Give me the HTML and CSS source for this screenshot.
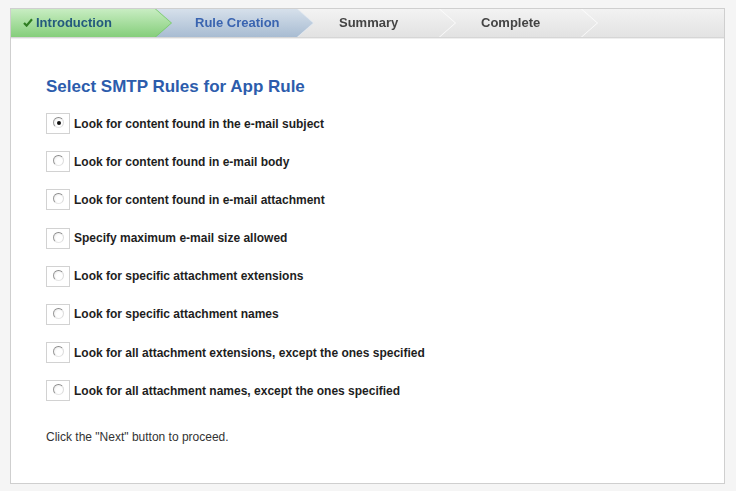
FILE: index.html
```
<!DOCTYPE html>
<html>
<head>
	<title>App Rule Wizard</title>
	<link rel="stylesheet" href="styles.css">
</head>
<body>
	<div class="wizard">
		<div class="steps">
			<div class="step done">
				<div class="step_in">
					<svg class="check" width="10" height="9" viewBox="0 0 10 9"><path d="M1 5 L3.6 7.6 L9 1.2" fill="none" stroke="#2f7d22" stroke-width="2.2"/></svg>
					<span>Introduction</span>
				</div>
			</div>
			<div class="step current"><div class="step_in"><span>Rule Creation</span></div></div>
			<div class="step"><div class="step_in"><span>Summary</span></div></div>
			<div class="step"><div class="step_in"><span>Complete</span></div></div>
		</div>
		<div class="content">
			<h2 class="title">Select SMTP Rules for App Rule</h2>
			<div class="rules">
				<label class="rule"><span class="radio_box"><span class="radio checked"></span></span>Look for content found in the e-mail subject</label>
				<label class="rule"><span class="radio_box"><span class="radio"></span></span>Look for content found in e-mail body</label>
				<label class="rule"><span class="radio_box"><span class="radio"></span></span>Look for content found in e-mail attachment</label>
				<label class="rule"><span class="radio_box"><span class="radio"></span></span>Specify maximum e-mail size allowed</label>
				<label class="rule"><span class="radio_box"><span class="radio"></span></span>Look for specific attachment extensions</label>
				<label class="rule"><span class="radio_box"><span class="radio"></span></span>Look for specific attachment names</label>
				<label class="rule"><span class="radio_box"><span class="radio"></span></span>Look for all attachment extensions, except the ones specified</label>
				<label class="rule"><span class="radio_box"><span class="radio"></span></span>Look for all attachment names, except the ones specified</label>
			</div>
			<p class="hint">Click the "Next" button to proceed.</p>
		</div>
	</div>
</body>
</html>
```

FILE: styles.css
```
html, body{
	margin: 0;
	background: #f5f5f5;
}
body{
	padding: 8px 10px;
	font-family: "Liberation Sans", Arial, sans-serif;
}
.wizard{
	width: 713px;
	height: 474px;
	border: 1px solid #cfcfcf;
	background: #fff;
	display: flex;
	flex-direction: column;
}
.steps{
	display: flex;
	height: 28px;
	background: linear-gradient(#f2f2f2, #e3e3e3);
	border-bottom: 1px solid #d6d6d6;
	box-shadow: 0 1px 0 #efefef;
}
.step{
	width: 160px;
	height: 28px;
	margin-left: -18px;
	position: relative;
	filter: drop-shadow(1px 0 0 #fdfdfd);
}
.step:nth-child(1){ margin-left: 0; z-index: 4; }
.step:nth-child(2){ z-index: 3; }
.step:nth-child(3){ z-index: 2; }
.step:nth-child(4){ z-index: 1; }
.step_in{
	height: 100%;
	display: flex;
	align-items: center;
	padding-left: 44px;
	padding-bottom: 2px;
	clip-path: polygon(0 0, 144px 0, 160px 50%, 144px 100%, 0 100%);
	background: linear-gradient(#f3f3f3, #e2e2e2);
	font-size: 13px;
	font-weight: bold;
	color: #444;
	box-sizing: border-box;
}
.done{
	filter: drop-shadow(1px 0 0 #74c967);
}
.done .step_in{
	padding-left: 12px;
	background: linear-gradient(#c8edc2, #85ce7b);
	color: #235a7d;
}
.check{
	margin-right: 3px;
	margin-top: 1px;
}
.current{
	filter: drop-shadow(1px 0 0 #e3e9f0);
}
.current .step_in{
	padding-left: 42px;
	background: linear-gradient(#d6e0eb, #a8bcd2);
	color: #3a64b0;
}
.content{
	padding: 39px 35px 0;
}
.title{
	margin: 0;
	font-size: 17px;
	line-height: 20px;
	color: #2c5cac;
}
.rules{
	margin-top: 16px;
	display: flex;
	flex-direction: column;
	gap: 17.2px;
}
.rule{
	display: flex;
	align-items: center;
	height: 21px;
	font-size: 12px;
	font-weight: bold;
	color: #1e1e1e;
}
.radio_box{
	width: 22px;
	height: 19px;
	border: 1px solid #d2d2d2;
	margin-right: 4px;
	display: flex;
	align-items: flex-start;
	background: #fff;
}
.radio{
	width: 9px;
	height: 9px;
	margin: 3px 0 0 6px;
	border-radius: 50%;
	border: 1px solid;
	border-color: #8a8a8a #dcdcdc #e6e6e6 #9a9a9a;
	background: radial-gradient(circle at 60% 60%, #fff 40%, #e4e4e4);
	position: relative;
}
.radio.checked::after{
	content: "";
	position: absolute;
	left: 2.5px;
	top: 2.5px;
	width: 4px;
	height: 4px;
	border-radius: 50%;
	background: #111;
}
.hint{
	margin: 29px 0 0;
	font-size: 12px;
	color: #333;
}
```
